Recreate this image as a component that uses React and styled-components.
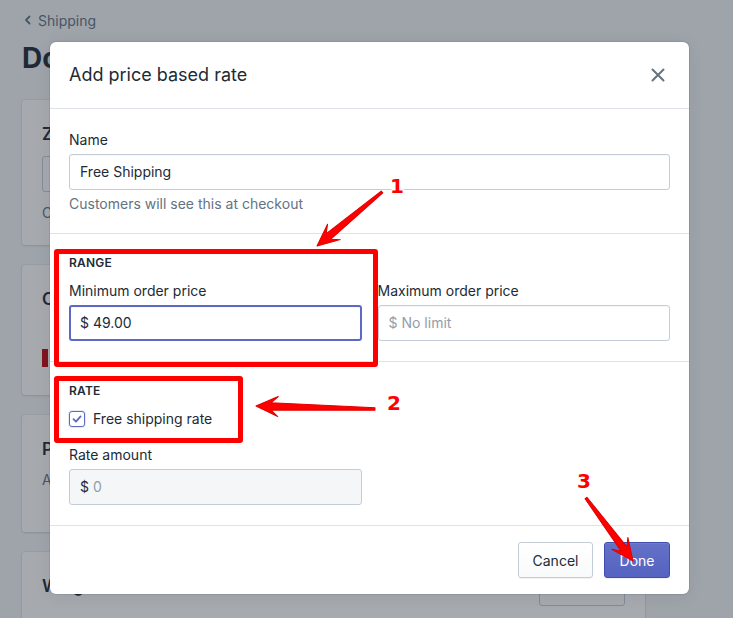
import React from "react";
import styled, { createGlobalStyle } from "styled-components";

const Global = createGlobalStyle`
  html, body { margin: 0; padding: 0; }
  body { font-family: Inter, "Noto Sans", "Liberation Sans", sans-serif; -webkit-font-smoothing: antialiased; }
`;

const Screen = styled.div`
  position: relative;
  width: 733px;
  height: 618px;
  overflow: hidden;
  background: #f4f6f8;
`;

const Page = styled.div`
  padding: 10px 88px 0 22px;
  display: flex;
  flex-direction: column;
`;

const Breadcrumb = styled.div`
  display: flex;
  align-items: center;
  gap: 4px;
  height: 20px;
  font-size: 14px;
  color: #637381;
`;

const PageTitle = styled.h1`
  margin: 12px 0 0;
  font-size: 28px;
  line-height: 32px;
  font-weight: 700;
  color: #212b36;
`;

const Cards = styled.div`
  margin-top: 26px;
  display: flex;
  flex-direction: column;
  gap: 20px;
`;

const Card = styled.div`
  background: #fff;
  border-radius: 3px;
  box-shadow: 0 0 0 1px rgba(63, 63, 68, 0.05), 0 1px 3px rgba(63, 63, 68, 0.15);
  height: ${(p) => p.$h}px;
  padding: 24px 20px;
  box-sizing: border-box;
  display: flex;
  flex-direction: column;
  gap: 12px;
`;

const CardHeading = styled.div`
  font-size: 17px;
  font-weight: 600;
  color: #212b36;
`;

const CardText = styled.div`
  font-size: 14px;
  color: #637381;
`;

const GhostInput = styled.div`
  height: 36px;
  width: 300px;
  border: 1px solid #c4cdd5;
  border-radius: 3px;
  box-sizing: border-box;
`;

const Swatch = styled.div`
  margin-top: 28px;
  width: 6px;
  height: 18px;
  background: #bf0711;
`;

const CardRow = styled.div`
  display: flex;
  justify-content: space-between;
  align-items: flex-start;
`;

const GhostButton = styled.div`
  width: 86px;
  height: 36px;
  box-sizing: border-box;
  border: 1px solid #c4cdd5;
  border-radius: 3px;
  margin-top: -6px;
`;

const Overlay = styled.div`
  position: absolute;
  inset: 0;
  background: rgba(33, 43, 54, 0.4);
`;

const Modal = styled.div`
  position: absolute;
  top: 42px;
  left: 50px;
  width: 639px;
  background: #fff;
  border-radius: 6px;
  box-shadow: 0 0 0 1px rgba(6, 44, 82, 0.1), 0 2px 16px rgba(33, 43, 54, 0.08);
  display: flex;
  flex-direction: column;
  color: #212b36;
  font-size: 14px;
  line-height: 20px;
`;

const Header = styled.div`
  height: 67px;
  box-sizing: border-box;
  padding: 0 20px 0 19px;
  display: flex;
  align-items: center;
  justify-content: space-between;
  border-bottom: 1px solid #dfe3e8;
`;

const Title = styled.h2`
  margin: 0;
  font-size: 18px;
  font-weight: 400;
  line-height: 28px;
`;

const Close = styled.button`
  border: 0;
  background: none;
  padding: 0;
  display: flex;
  color: #637381;
  margin-right: 3px;
`;

const Section = styled.div`
  padding: 21px 19px ${(p) => (p.$pb ? p.$pb : 20)}px 19px;
  display: flex;
  flex-direction: column;
  border-bottom: ${(p) => (p.$last ? "0" : "1px solid #dfe3e8")};
`;

const Label = styled.div`
  margin-bottom: 4px;
`;

const Help = styled.div`
  margin-top: 4px;
  color: #637381;
`;

const Subheading = styled.div`
  font-size: 12px;
  line-height: 16px;
  font-weight: 600;
  text-transform: uppercase;
  letter-spacing: 0.2px;
  margin-bottom: 10px;
`;

const Columns = styled.div`
  display: grid;
  grid-template-columns: 1fr 1fr;
  gap: 16px;
`;

const Field = styled.div`
  display: flex;
  flex-direction: column;
  width: ${(p) => (p.$half ? "293px" : "auto")};
`;

const Input = styled.div`
  height: 36px;
  box-sizing: border-box;
  display: flex;
  align-items: center;
  gap: 4px;
  padding: 0 ${(p) => (p.$focused ? "9px" : "10px")};
  border: ${(p) => (p.$focused ? "2px solid #5c6ac4" : "1px solid #c4cdd5")};
  border-radius: 3px;
  background: ${(p) => (p.$disabled ? "#f4f6f8" : "#fff")};
  box-shadow: ${(p) => (p.$disabled ? "none" : "inset 0 1px 0 0 rgba(99,115,129,0.05)")};
  font-size: 14px;
`;

const Prefix = styled.span`
  color: ${(p) => (p.$muted ? "#919eab" : "#212b36")};
`;

const Placeholder = styled.span`
  color: #919eab;
`;

const CheckRow = styled.label`
  display: flex;
  align-items: center;
  gap: 8px;
  height: 20px;
`;

const Box = styled.span`
  width: 16px;
  height: 16px;
  box-sizing: border-box;
  border: 1px solid #5c6ac4;
  border-radius: 3px;
  display: flex;
  align-items: center;
  justify-content: center;
  background: #fff;
  box-shadow: 0 0 0 1px rgba(92,106,196,0.15);
`;

const RateLabel = styled(Label)`
  margin-top: 16px;
`;

const Footer = styled.div`
  border-top: 1px solid #dfe3e8;
  padding: 16px 19px 16px;
  display: flex;
  justify-content: flex-end;
  gap: 11px;
`;

const Button = styled.button`
  height: 36px;
  box-sizing: border-box;
  padding: 0 13px;
  border-radius: 3px;
  font-family: inherit;
  font-size: 14px;
  border: 1px solid ${(p) => (p.$primary ? "#3f4eae" : "#c4cdd5")};
  background: ${(p) =>
    p.$primary
      ? "linear-gradient(180deg, #6371c7, #5563c1)"
      : "linear-gradient(180deg, #fff, #f9fafb)"};
  color: ${(p) => (p.$primary ? "#fff" : "#212b36")};
  box-shadow: ${(p) =>
    p.$primary
      ? "inset 0 1px 0 0 #6f7bcb, 0 1px 0 0 rgba(22,29,37,0.05)"
      : "0 1px 0 0 rgba(22,29,37,0.05)"};
  width: ${(p) => p.$w}px;
`;

const Annotation = styled.div`
  position: absolute;
  left: ${(p) => p.$x}px;
  top: ${(p) => p.$y}px;
  width: ${(p) => p.$w}px;
  height: ${(p) => p.$h}px;
  box-sizing: border-box;
  border: 5px solid #ff0000;
  border-radius: 3px;
`;

const Marks = styled.svg`
  position: absolute;
  inset: 0;
  pointer-events: none;
`;

const Num = styled.text`
  font-family: "DejaVu Sans", "Liberation Sans", sans-serif;
  font-weight: 700;
  font-size: 20px;
  fill: #ff0000;
  stroke: #fff;
  stroke-width: 3px;
  paint-order: stroke;
  stroke-linejoin: round;
`;

function Arrow({ x1, y1, x2, y2 }) {
  const dx = x2 - x1;
  const dy = y2 - y1;
  const L = Math.sqrt(dx * dx + dy * dy);
  const a = (Math.atan2(dy, dx) * 180) / Math.PI;
  const pts = [
    [0, -1.2],
    [L - 15, -3.6],
    [L - 22, -10],
    [L, 0],
    [L - 22, 10],
    [L - 15, 3.6],
    [0, 1.2],
  ]
    .map((p) => p.join(","))
    .join(" ");
  return (
    <polygon
      points={pts}
      fill="#ff0000"
      stroke="#e00000"
      strokeWidth="1"
      strokeLinejoin="round"
      transform={`translate(${x1} ${y1}) rotate(${a})`}
    />
  );
}

export default function App() {
  return (
    <>
      <Global />
      <Screen>
        <Page>
          <Breadcrumb>
            <svg width="12" height="12" viewBox="0 0 12 12">
              <path d="M7.5 2.5 L4 6 L7.5 9.5" fill="none" stroke="#637381" strokeWidth="1.8" strokeLinecap="round" strokeLinejoin="round" />
            </svg>
            Shipping
          </Breadcrumb>
          <PageTitle>Domestic</PageTitle>
          <Cards>
            <Card $h={145}>
              <CardHeading>Zone</CardHeading>
              <GhostInput />
              <CardText>Cu</CardText>
            </Card>
            <Card $h={130}>
              <CardHeading>Co</CardHeading>
              <Swatch />
            </Card>
            <Card $h={117}>
              <CardHeading>Pr</CardHeading>
              <CardText>Ad</CardText>
            </Card>
            <Card $h={120}>
              <CardRow>
                <CardHeading>Weight</CardHeading>
                <GhostButton />
              </CardRow>
            </Card>
          </Cards>
        </Page>
        <Overlay />
        <Modal>
          <Header>
            <Title>Add price based rate</Title>
            <Close aria-label="Close">
              <svg width="16" height="16" viewBox="0 0 16 16">
                <path d="M2.5 2.5 L13.5 13.5 M13.5 2.5 L2.5 13.5" stroke="#637381" strokeWidth="2" strokeLinecap="round" />
              </svg>
            </Close>
          </Header>
          <Section $pb={19}>
            <Label>Name</Label>
            <Input>
              <span>Free Shipping</span>
            </Input>
            <Help>Customers will see this at checkout</Help>
          </Section>
          <Section>
            <Subheading>Range</Subheading>
            <Columns>
              <Field>
                <Label>Minimum order price</Label>
                <Input $focused>
                  <Prefix>$</Prefix>
                  <span>49.00</span>
                </Input>
              </Field>
              <Field>
                <Label>Maximum order price</Label>
                <Input>
                  <Prefix $muted>$</Prefix>
                  <Placeholder>No limit</Placeholder>
                </Input>
              </Field>
            </Columns>
          </Section>
          <Section $last>
            <Subheading>Rate</Subheading>
            <CheckRow>
              <Box>
                <svg width="12" height="12" viewBox="0 0 12 12">
                  <path d="M2.5 6.2 L5 8.6 L9.6 3.4" fill="none" stroke="#5c6ac4" strokeWidth="1.8" strokeLinecap="round" strokeLinejoin="round" />
                </svg>
              </Box>
              Free shipping rate
            </CheckRow>
            <Field $half>
              <RateLabel>Rate amount</RateLabel>
              <Input $disabled>
                <Prefix>$</Prefix>
                <Placeholder>0</Placeholder>
              </Input>
            </Field>
          </Section>
          <Footer>
            <Button $w={75}>Cancel</Button>
            <Button $primary $w={66}>Done</Button>
          </Footer>
        </Modal>
        <Annotation $x={54} $y={249} $w={324} $h={118} />
        <Annotation $x={54} $y={376} $w={189} $h={67} />
        <Marks width="733" height="618" viewBox="0 0 733 618">
          <Arrow x1={382} y1={192} x2={317} y2={246} />
          <Arrow x1={375} y1={409} x2={256} y2={406} />
          <Arrow x1={586} y1={498} x2={633} y2={561} />
          <Num x="390" y="193">1</Num>
          <Num x="387" y="410">2</Num>
          <Num x="577" y="488">3</Num>
        </Marks>
      </Screen>
    </>
  );
}
